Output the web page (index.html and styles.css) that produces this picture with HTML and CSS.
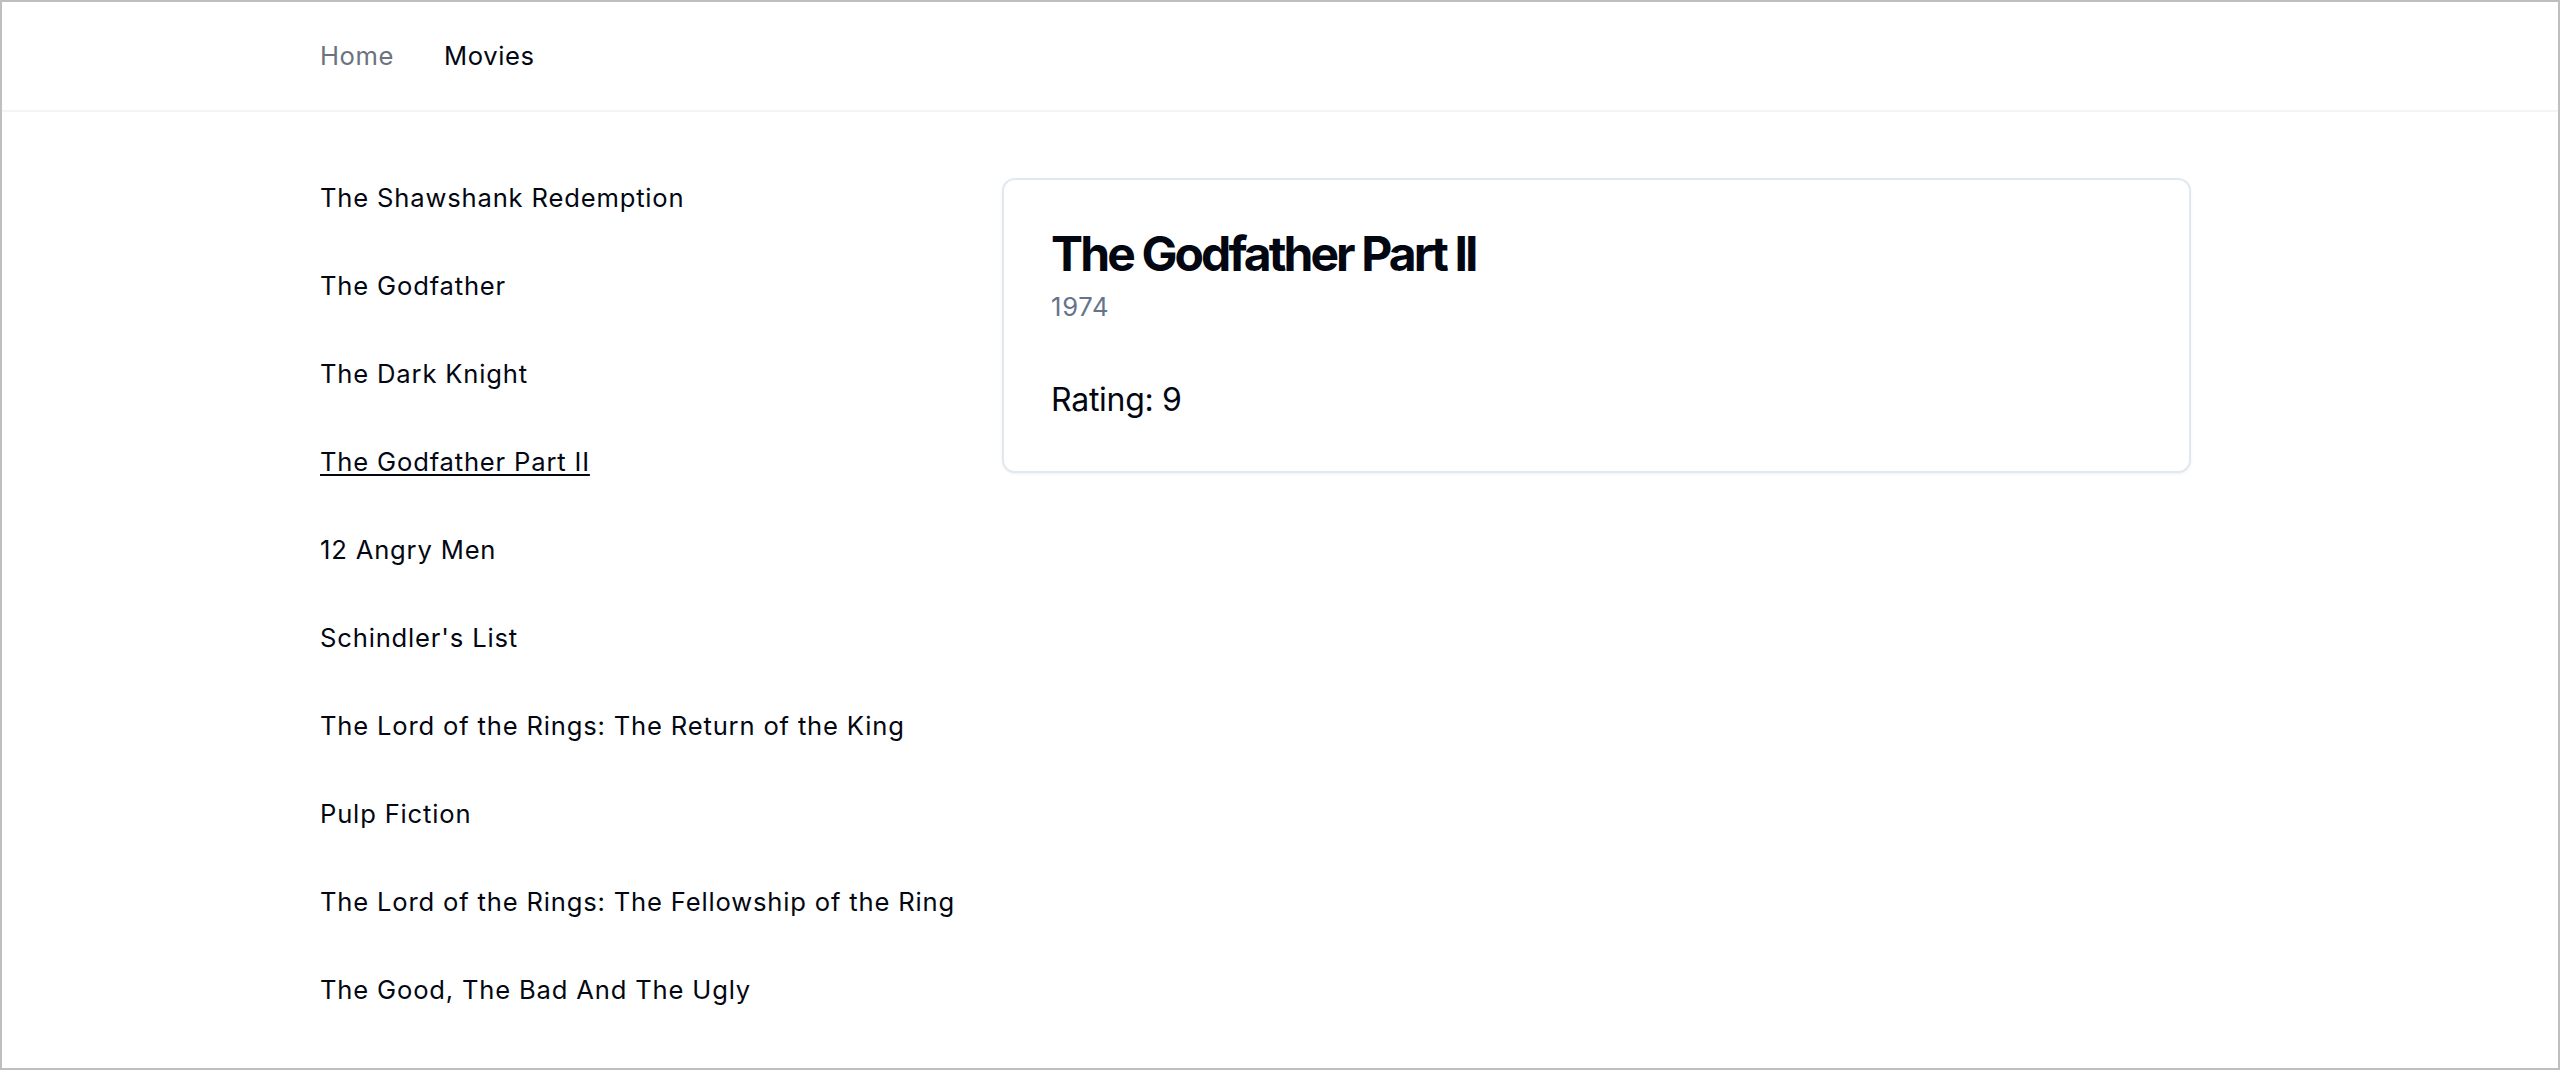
FILE: index.html
```html
<!DOCTYPE html>
<html lang="en">
<head>
<meta charset="utf-8">
<title>Movies</title>
<link rel="stylesheet" href="styles.css">
</head>
<body>
<div class="frame">
  <header class="header">
    <nav class="nav">
      <a class="nav-link" href="#">Home</a>
      <a class="nav-link nav-link-active" href="#">Movies</a>
    </nav>
  </header>
  <main class="main">
    <ul class="movie-list">
      <li class="movie-item"><a href="#">The Shawshank Redemption</a></li>
      <li class="movie-item"><a href="#">The Godfather</a></li>
      <li class="movie-item"><a href="#">The Dark Knight</a></li>
      <li class="movie-item movie-item-active"><a href="#">The Godfather Part II</a></li>
      <li class="movie-item"><a href="#">12 Angry Men</a></li>
      <li class="movie-item"><a href="#">Schindler's List</a></li>
      <li class="movie-item"><a href="#">The Lord of the Rings: The Return of the King</a></li>
      <li class="movie-item"><a href="#">Pulp Fiction</a></li>
      <li class="movie-item"><a href="#">The Lord of the Rings: The Fellowship of the Ring</a></li>
      <li class="movie-item"><a href="#">The Good, The Bad And The Ugly</a></li>
    </ul>
    <section class="detail">
      <article class="card">
        <h1 class="card-title">The Godfather Part II</h1>
        <p class="card-year">1974</p>
        <p class="card-rating">Rating: 9</p>
      </article>
    </section>
  </main>
</div>
</body>
</html>
```

FILE: styles.css
```css
* {
  box-sizing: border-box;
}

html, body {
  margin: 0;
  padding: 0;
  background: #ffffff;
}

body {
  font-family: Inter, "Noto Sans", "Liberation Sans", sans-serif;
  color: #0f172a;
}

.frame {
  width: 2560px;
  height: 1070px;
  border: 2px solid #bfbfbf;
  overflow: hidden;
  background: #ffffff;
}

.header {
  height: 110px;
  border-bottom: 2px solid #f3f4f6;
  display: flex;
  align-items: center;
  padding-left: 318px;
}

.nav {
  display: flex;
  align-items: center;
  gap: 50px;
}

.nav-link {
  font-size: 25.6px;
  line-height: 38px;
  letter-spacing: 0.6px;
  text-decoration: none;
  color: #6b7280;
}

.nav-link-active {
  color: #030712;
}

.main {
  display: grid;
  grid-template-columns: 633.6px 1189px;
  column-gap: 48px;
  align-items: start;
  padding: 42px 0 0 318px;
}

.movie-list {
  list-style: none;
  margin: 0;
  padding: 0;
}

.movie-item {
  padding: 24.8px 0;
  font-size: 25.6px;
  line-height: 38.4px;
  letter-spacing: 0.82px;
  white-space: nowrap;
}

.movie-item a {
  color: #030712;
  text-decoration: none;
}

.movie-item-active a {
  text-decoration: underline;
  text-decoration-thickness: 2px;
  text-underline-offset: 3px;
}

.detail {
  padding-top: 24px;
}

.card {
  border: 2px solid #e2e8f0;
  border-radius: 13px;
  padding: 44.6px 48px 48px 47.5px;
  background: #ffffff;
  box-shadow: 0 1px 3px rgba(15, 23, 42, 0.06);
}

.card-title {
  margin: 0;
  font-size: 48px;
  line-height: 57.6px;
  font-weight: 700;
  letter-spacing: -2.9px;
  color: #030712;
}

.card-year {
  margin: 6.3px 0 0;
  font-size: 25.6px;
  line-height: 38.4px;
  letter-spacing: 0.7px;
  color: #64748b;
}

.card-rating {
  margin: 51px 0 0;
  font-size: 32px;
  line-height: 44.8px;
  letter-spacing: -0.3px;
  color: #030712;
}
```
